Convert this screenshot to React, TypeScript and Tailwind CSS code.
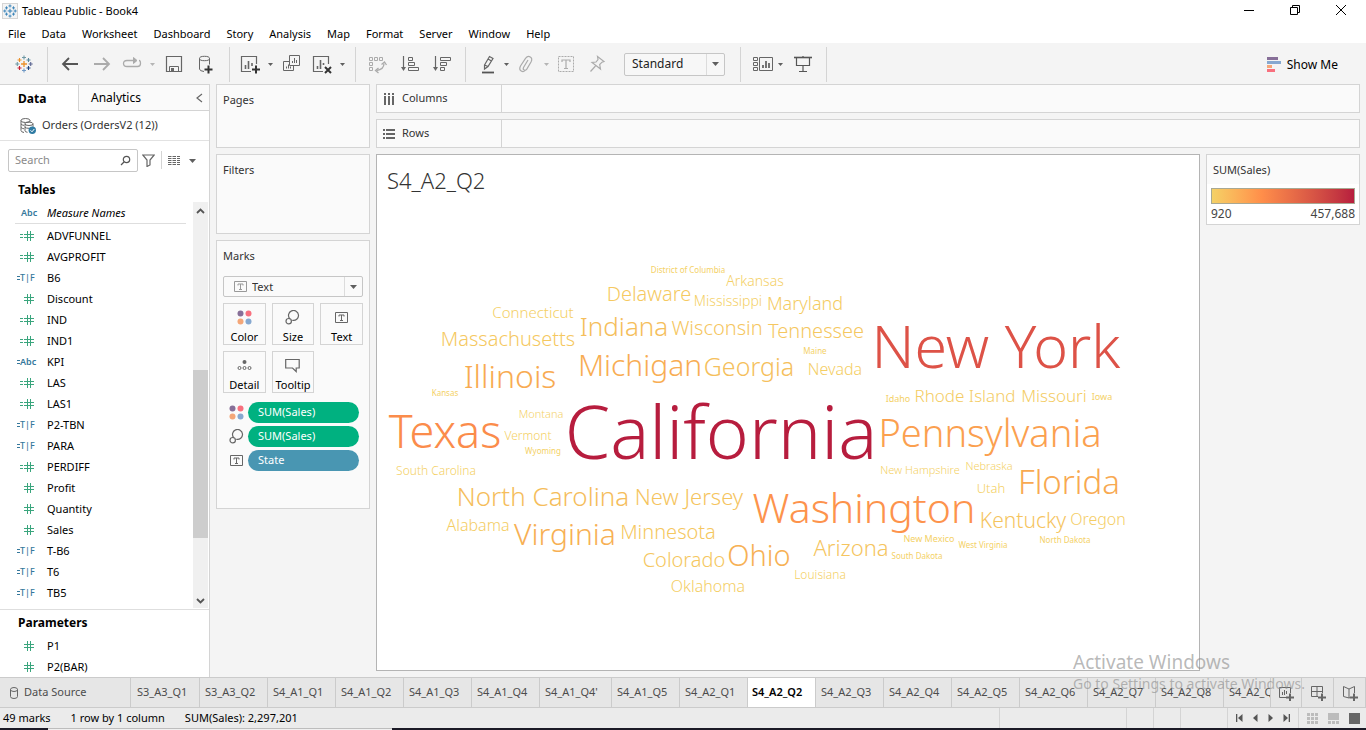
import type { ReactNode } from "react";

const UI_FONT = "font-['Noto_Sans','Open_Sans',sans-serif]";

/* ---------- icons ---------- */

function Plus({ x, y, color }: { x: number; y: number; color: string }) {
  return <path d={`M${x - 2} ${y}h4M${x} ${y - 2}v4`} stroke={color} strokeWidth="1.1" />;
}

function LogoIcon({ mono = false }: { mono?: boolean }) {
  const c = (value: string) => (mono ? "#2f7db5" : value);
  return (
    <svg viewBox="0 0 18 18" className={mono ? "size-3.5" : "size-4.5"} fill="none" aria-hidden="true">
      <path d="M9 6v6M6 9h6" stroke={c("#eb912b")} strokeWidth="1.3" />
      <path d="M4.5 3v4M2.5 5h4" stroke={c("#eb912b")} strokeWidth="1.1" />
      <path d="M13.5 3v4M11.5 5h4" stroke={c("#59879b")} strokeWidth="1.1" />
      <path d="M4.5 11v4M2.5 13h4" stroke={c("#c72035")} strokeWidth="1.1" />
      <path d="M13.5 11v4M11.5 13h4" stroke={c("#1f447e")} strokeWidth="1.1" />
      <Plus x={9} y={2.5} color={c("#7099a5")} />
      <Plus x={9} y={15.5} color={c("#7099c5")} />
      <Plus x={2.3} y={9} color={c("#7099a5")} />
      <Plus x={15.7} y={9} color={c("#5c6692")} />
    </svg>
  );
}

function Icon({ children, color = "#666", size = 20 }: { children: ReactNode; color?: string; size?: number }) {
  return (
    <svg
      width={size}
      height={size}
      viewBox={`0 0 ${size} ${size}`}
      fill="none"
      stroke={color}
      strokeWidth="1"
      aria-hidden="true"
      className="shrink-0"
    >
      {children}
    </svg>
  );
}

function Caret({ light = false, big = false }: { light?: boolean; big?: boolean }) {
  return (
    <svg
      width={big ? 7 : 5}
      height={big ? 4 : 3}
      viewBox="0 0 7 4"
      aria-hidden="true"
      className="pointer-events-none shrink-0"
    >
      <path d="M0 0h7L3.5 4z" fill={light ? "#b5b5b5" : "#5f5f5f"} />
    </svg>
  );
}

const BackIcon = () => (
  <Icon color="#555">
    <path d="M18 10H3M9 4l-6 6 6 6" strokeWidth="1.8" />
  </Icon>
);
const ForwardIcon = () => (
  <Icon color="#ababab">
    <path d="M2 10h15M11 4l6 6-6 6" strokeWidth="1.8" />
  </Icon>
);
const RedoIcon = () => (
  <Icon color="#ababab">
    <path d="M14 6.500H5Q1.500 6.500 1.500 9.500T5 12.500H15.500Q18.500 12.500 18.500 9.500T17 6.500" strokeWidth="1.300" />
    <path d="M11.500 3.500l3.500 3-3.500 3z" fill="#ababab" />
  </Icon>
);
const SaveIcon = () => (
  <Icon>
    <path d="M2.500 2.500h15v15h-15z" strokeWidth="1.200" />
    <path d="M5.500 17.500v-5h9v5" />
    <path d="M7 14h3v3.500H7z" fill="#666" stroke="none" />
  </Icon>
);
const DatabasePlusIcon = () => (
  <Icon>
    <ellipse cx="8.500" cy="4.500" rx="5" ry="2.200" />
    <path d="M3.500 4.500v10.500q0 2 4.500 2.500M13.500 4.500v6" />
    <path d="M8.500 15.500h8M12.500 11.500v8" stroke="#333" strokeWidth="2" />
  </Icon>
);
const NewSheetIcon = () => (
  <Icon>
    <path d="M16.500 10V2.500h-15v15H11" strokeWidth="1.200" />
    <path d="M5.500 15v-4M8.500 15V7M12 12V9" strokeWidth="1.600" />
    <path d="M12 15.500h8M16 11.500v8" stroke="#333" strokeWidth="2" />
  </Icon>
);
const DuplicateIcon = () => (
  <Icon>
    <path d="M7.500 1.500h10v10h-10zM7 7.500H1.500v9h10V12" />
    <path d="M10.500 9V7M12.500 9V4M14.500 9V6M4.500 14.500v-2M6.500 14.500v-4M8.500 14.500v-2" />
  </Icon>
);
const ClearSheetIcon = () => (
  <Icon>
    <path d="M16.500 10V2.500h-15v15H11" strokeWidth="1.200" />
    <path d="M5.500 15v-3M8.500 15V6M11.500 11V9" strokeWidth="1.600" />
    <path d="M13 13l6 6M19 13l-6 6" stroke="#333" strokeWidth="2" />
  </Icon>
);
const SwapIcon = () => (
  <Icon color="#ababab">
    <path d="M1.500 3.500h3v3h-3zM6.500 3.500h3v3h-3zM11.500 3.500h3v3h-3zM1.500 8.500h3v3h-3zM1.500 13.500h3v3h-3z" />
    <path d="M16 9.500q0 6-7.500 7" strokeWidth="1.300" />
    <path d="M13.500 10.500l3-2.500 2 3M10.500 14l-3 2.500 3 2.500" strokeWidth="1.300" />
  </Icon>
);
const SortAscIcon = () => (
  <Icon>
    <path d="M3.500 2v13" strokeWidth="1.200" />
    <path d="M1 13h5l-2.500 4z" fill="#666" stroke="none" />
    <path d="M8.500 3.500h4v3h-4zM8.500 8.500h6v3h-6zM8.500 13.500h10v3h-10z" />
  </Icon>
);
const SortDescIcon = () => (
  <Icon>
    <path d="M3.500 2v13" strokeWidth="1.200" />
    <path d="M1 13h5l-2.500 4z" fill="#666" stroke="none" />
    <path d="M8.500 3.500h10v3h-10zM8.500 8.500h6v3h-6zM8.500 13.500h4v3h-4z" />
  </Icon>
);
const HighlightIcon = () => (
  <Icon>
    <path d="M6.500 11L11.500 2.500l3.500 2L10 12.500l-3.500 2.500zM6.500 11l3.500 1.500M10 5l3.500 2" strokeWidth="1.200" />
    <path d="M4 18.500h12" strokeWidth="1.800" stroke="#555" />
  </Icon>
);
const ClipIcon = () => (
  <Icon color="#ababab">
    <path
      d="M12 6l-4.500 7.500q-.8 2 .7 2.600t2.600-1L15 8q1.800-3.500-.7-5t-4.800 1.300L4.500 12q-1.800 3.500.7 5t4.500-1"
      strokeWidth="1.200"
    />
  </Icon>
);
const LabelIcon = () => (
  <Icon color="#ababab">
    <path d="M2.500 2.500h15v15h-15z" strokeDasharray="2 1" />
    <path d="M6 8V6h8v2M10 6v8.500M8 14.500h4" strokeWidth="1.200" />
  </Icon>
);
const PinIcon = () => (
  <Icon color="#ababab">
    <path d="M9.500 2.500l6.500 5-2 .7-2.300 2.300.8 4.500L4 8.500l4-.5 2-2.500zM7.500 12L2.500 17.500" strokeWidth="1.200" />
  </Icon>
);
const CardsIcon = () => (
  <Icon>
    <path d="M.5 3.500h4v3h-4zM.5 8.500h4v3h-4zM.5 13.500h4v3h-4zM6.500 3.500h13v13h-13z" />
    <path d="M10 14v-3M13 14V7M16 14V9" strokeWidth="1.800" />
  </Icon>
);
const PresentIcon = () => (
  <Icon color="#555">
    <path d="M1 3.500h18" strokeWidth="1.600" />
    <path d="M3.500 4v7.500h13V4M10 11.500V17M10 2v1.500M6 17.500h8" strokeWidth="1.200" />
  </Icon>
);

function ColorDots() {
  return (
    <svg width="15" height="15" viewBox="0 0 15 15" aria-hidden="true" className="shrink-0">
      <circle cx="3.500" cy="3.500" r="3" fill="#876f98" />
      <circle cx="11.500" cy="3.500" r="3" fill="#f8707e" />
      <circle cx="3.500" cy="11.500" r="3" fill="#f4a678" />
      <circle cx="11.500" cy="11.500" r="3" fill="#86a8d0" />
    </svg>
  );
}
const SizeIcon = () => (
  <Icon size={15} color="#666">
    <path d="M4.800 8.800A5 5 0 1 1 7.300 10.300" strokeWidth="1.200" />
    <circle cx="3.700" cy="11.200" r="2.700" strokeWidth="1.200" />
  </Icon>
);
const TextIcon = ({ light = false }: { light?: boolean }) => (
  <Icon size={15} color={light ? "#999" : "#666"}>
    <path d="M1.500 2.500h12v10h-12z" />
    <path d="M5 6.500V5h5v1.500M7.500 5v5.500M6 10.500h3" />
  </Icon>
);
const DetailIcon = () => (
  <Icon size={15}>
    <circle cx="7.500" cy="4" r="2" fill="#666" stroke="none" />
    <circle cx="2.500" cy="10" r="1.500" />
    <circle cx="7.500" cy="10" r="1.500" />
    <circle cx="12.500" cy="10" r="1.500" />
  </Icon>
);
const TooltipIcon = () => (
  <Icon size={15}>
    <path d="M.7 1.500h13.500v8.500h-3v3.500L7.500 10H.7z" strokeWidth="1.200" />
  </Icon>
);

/* ---------- window chrome ---------- */

function TitleBar() {
  return (
    <header className="flex h-[22px] shrink-0 items-center bg-white pl-0.5">
      <span className="border border-[#d5d5d5] bg-[#f4f4f4]">
        <LogoIcon mono />
      </span>
      <h1 className="ml-1 text-[11px]">Tableau Public - Book4</h1>
      <div className="ml-auto flex pb-0.5 pr-0.5">
        <button aria-label="Minimize" className="flex w-[46px] justify-center">
          <Icon size={12} color="#000">
            <path d="M1 6.500h10" />
          </Icon>
        </button>
        <button aria-label="Restore" className="flex w-[46px] justify-center">
          <Icon size={12} color="#000">
            <path d="M1.500 3.500h7v7h-7zM3.500 3V1.500h7v7H9" />
          </Icon>
        </button>
        <button aria-label="Close" className="flex w-[46px] justify-center">
          <Icon size={12} color="#000">
            <path d="M1 1l10 10M11 1L1 11" />
          </Icon>
        </button>
      </div>
    </header>
  );
}

const MENUS = [
  "File",
  "Data",
  "Worksheet",
  "Dashboard",
  "Story",
  "Analysis",
  "Map",
  "Format",
  "Server",
  "Window",
  "Help",
];

function MenuBar() {
  return (
    <nav className="flex h-[21px] shrink-0 items-center gap-4 bg-white pl-2 pt-1">
      {MENUS.map((menu) => (
        <button key={menu} className="text-[11px]">
          {menu}
        </button>
      ))}
    </nav>
  );
}

function Tool({ label, className, children }: { label: string; className: string; children: ReactNode }) {
  return (
    <button aria-label={label} className={`flex h-full shrink-0 items-center justify-center ${className}`}>
      {children}
    </button>
  );
}

function ToolGroup({ className = "", children }: { className?: string; children: ReactNode }) {
  return <div className={`flex shrink-0 items-center border-r border-[#d4d4d4] pb-px ${className}`}>{children}</div>;
}

function Toolbar() {
  return (
    <div className="flex h-[41px] shrink-0 bg-[#f4f4f4] pt-1 pb-0.5">
      <ToolGroup>
        <Tool label="Start page" className="w-[47px]">
          <LogoIcon />
        </Tool>
      </ToolGroup>
      <ToolGroup className="pl-1.5 pr-[7px]">
        <Tool label="Undo" className="w-8"><BackIcon /></Tool>
        <Tool label="Redo" className="w-8"><ForwardIcon /></Tool>
        <Tool label="Replay" className="w-7"><RedoIcon /></Tool>
        <Tool label="Replay options" className="w-3"><Caret light /></Tool>
        <Tool label="Save" className="w-8"><SaveIcon /></Tool>
        <Tool label="New data source" className="w-8"><DatabasePlusIcon /></Tool>
      </ToolGroup>
      <ToolGroup className="pl-1 pr-[5px]">
        <Tool label="New worksheet" className="w-8"><NewSheetIcon /></Tool>
        <Tool label="New worksheet options" className="w-2"><Caret /></Tool>
        <Tool label="Duplicate" className="w-9"><DuplicateIcon /></Tool>
        <Tool label="Clear sheet" className="w-6"><ClearSheetIcon /></Tool>
        <Tool label="Clear options" className="w-4"><Caret /></Tool>
      </ToolGroup>
      <ToolGroup className="pl-1.5 pr-[7px]">
        <Tool label="Swap rows and columns" className="w-8"><SwapIcon /></Tool>
        <Tool label="Sort ascending" className="w-8"><SortAscIcon /></Tool>
        <Tool label="Sort descending" className="w-8"><SortDescIcon /></Tool>
      </ToolGroup>
      <ToolGroup className="pl-2 pr-[15px]">
        <Tool label="Highlight" className="w-7"><HighlightIcon /></Tool>
        <Tool label="Highlight options" className="w-2"><Caret /></Tool>
        <Tool label="Group members" className="w-8"><ClipIcon /></Tool>
        <Tool label="Group options" className="w-2"><Caret light /></Tool>
        <Tool label="Show mark labels" className="w-8"><LabelIcon /></Tool>
        <Tool label="Fix axes" className="w-8"><PinIcon /></Tool>
        <div className="relative ml-2.5 h-[23px] w-[101px]">
          <select
            aria-label="Fit"
            className="block h-full w-full appearance-none rounded-xs border border-[#c6c6c6] bg-[#f7f7f7] pl-[7px] text-[12px] leading-[20px] text-[#222]"
          >
            <option>Standard</option>
          </select>
          <span className="pointer-events-none absolute inset-y-px right-px flex w-[18px] items-center justify-center border-l border-[#dcdcdc]">
            <Caret big />
          </span>
        </div>
      </ToolGroup>
      <ToolGroup className="pl-2.5 pr-[5px]">
        <Tool label="Show/hide cards" className="w-6"><CardsIcon /></Tool>
        <Tool label="Card options" className="w-2.5"><Caret /></Tool>
        <Tool label="Presentation mode" className="w-9"><PresentIcon /></Tool>
      </ToolGroup>
      <button className="ml-auto flex items-center gap-1.5 pr-7 text-[12px]">
        <svg width="14" height="16" viewBox="0 0 14 16" aria-hidden="true">
          <path d="M0 0h11v3H0z" fill="#876f98" />
          <path d="M0 4h14v3H0z" fill="#86a8d0" />
          <path d="M0 8h5v3H0z" fill="#f4a678" />
          <path d="M0 12h8v3H0z" fill="#f8707e" />
        </svg>
        Show Me
      </button>
    </div>
  );
}

/* ---------- data pane ---------- */

type FieldKind = "number" | "calcNumber" | "calcBool" | "text" | "calcText";

const FIELDS: [string, FieldKind][] = [
  ["ADVFUNNEL", "calcNumber"],
  ["AVGPROFIT", "calcNumber"],
  ["B6", "calcBool"],
  ["Discount", "number"],
  ["IND", "calcNumber"],
  ["IND1", "calcNumber"],
  ["KPI", "calcText"],
  ["LAS", "calcNumber"],
  ["LAS1", "calcNumber"],
  ["P2-TBN", "calcBool"],
  ["PARA", "calcBool"],
  ["PERDIFF", "calcNumber"],
  ["Profit", "number"],
  ["Quantity", "number"],
  ["Sales", "number"],
  ["T-B6", "calcBool"],
  ["T6", "calcBool"],
  ["TB5", "calcBool"],
];

function FieldIcon({ kind }: { kind: FieldKind }) {
  const isNumber = kind === "number" || kind === "calcNumber";
  const isCalc = kind.startsWith("calc");
  const color = isNumber ? "#3aa57d" : "#35789c";
  return (
    <span className="flex w-10 shrink-0 items-center text-[9px] text-[#35789c]">
      <span
        className={
          isNumber
            ? "flex w-[27px] items-center justify-end gap-px"
            : kind === "text"
              ? "flex items-center pl-3.5"
              : "flex items-center pl-2.5"
        }
      >
        {isCalc && (
          <svg width="3" height="10" viewBox="0 0 3 10" aria-hidden="true">
            <path d="M0 3.500h3M0 6.500h3" stroke={color} />
          </svg>
        )}
        {isNumber && (
          <svg width="10" height="10" viewBox="0 0 10 10" aria-hidden="true">
            <path d="M3.500 0v10M6.500 0v10M0 3.500h10M0 6.500h10" stroke={color} />
          </svg>
        )}
        {kind === "calcBool" && <span className="font-medium">T|F</span>}
        {(kind === "text" || kind === "calcText") && <b className="font-semibold">Abc</b>}
      </span>
    </span>
  );
}

function FieldRow({ name, kind, italic = false }: { name: string; kind: FieldKind; italic?: boolean }) {
  return (
    <li className="flex h-[21px] items-center pt-px pl-[7px] text-[11px]">
      <FieldIcon kind={kind} />
      <span className={italic ? "italic" : ""}>{name}</span>
    </li>
  );
}

function DataPane() {
  return (
    <aside className="flex w-[210px] shrink-0 flex-col border-r border-t border-[#d4d4d4] bg-white">
      <div role="tablist" className="flex h-[26px] shrink-0 text-[12px]">
        <button role="tab" aria-selected="true" className="w-[78px] pt-px pl-[18px] text-left font-bold">
          Data
        </button>
        <button
          role="tab"
          aria-selected="false"
          className="flex-1 border-b border-l border-[#d4d4d4] bg-[#fafafa] pt-px pl-3 text-left"
        >
          Analytics
        </button>
        <button aria-label="Collapse pane" className="flex w-[20px] items-center border-b border-[#d4d4d4] bg-[#fafafa] pl-1.5">
          <svg width="8" height="10" viewBox="0 0 8 10" fill="none" aria-hidden="true">
            <path d="M7 1L2 5l5 4" stroke="#666" strokeWidth="1.200" />
          </svg>
        </button>
      </div>
      <button className="flex h-[30px] shrink-0 items-center gap-1.5 border-b border-[#e2e2e2] pl-5 text-[11px] text-[#333]">
        <Icon size={16}>
          <ellipse cx="5.500" cy="2.500" rx="4.500" ry="2" />
          <path d="M1 2.500v10q0 1.500 3 2M10 2.500v1M1 6q1 1.200 3 1.400M1 9.500q1 1 3 1.300" />
          <ellipse cx="9" cy="5.800" rx="4" ry="1.700" />
          <path d="M5 5.800v7q0 1.200 2.500 1.500M13 5.800v3M5 9.300q1 1 4 1" />
          <circle cx="12.300" cy="12.300" r="3.700" fill="#2f7ba3" stroke="none" />
          <path d="M10.500 12.300l1.500 1.500 2.300-2.800" stroke="#fff" />
        </Icon>
        Orders (OrdersV2 (12))
      </button>
      <div className="flex h-[31px] shrink-0 items-end pl-2">
        <label className="flex h-[23px] w-[130px] items-center rounded-xs border border-[#c6c6c6] px-1.5">
          <input
            aria-label="Search fields"
            placeholder="Search"
            className="min-w-0 flex-1 bg-transparent text-[11px] outline-none placeholder:text-[#8a8a8a]"
          />
          <Icon size={11} color="#555">
            <circle cx="6.500" cy="4.500" r="3.200" strokeWidth="1.200" />
            <path d="M4 7L1 10" strokeWidth="1.200" />
          </Icon>
        </label>
        <button aria-label="Filter fields" className="ml-1 flex h-[23px] items-center">
          <Icon size={13}>
            <path d="M.8 1h11.400L8 6v5l-3 1.500V6z" strokeWidth="1.200" />
          </Icon>
        </button>
        <span className="mb-[3px] ml-1.5 h-[18px] border-l border-[#d4d4d4]" />
        <button aria-label="View options" className="ml-1.5 flex h-[23px] items-center gap-[9px]">
          <svg width="12" height="9" viewBox="0 0 12 9" aria-hidden="true">
            <path d="M0 .5h12M0 2.500h12M0 4.500h12M0 6.500h12M0 8.500h12" stroke="#666" strokeDasharray="3.500 1" />
          </svg>
          <Caret big />
        </button>
      </div>
      <h2 className="flex h-[30px] shrink-0 items-center pt-1.5 pl-[18px] text-[12px] font-bold">Tables</h2>
      <div className="flex min-h-0 flex-1">
        <ul className="min-w-0 flex-1 overflow-hidden">
          <FieldRow name="Measure Names" kind="text" italic />
          <li aria-hidden="true" className="mb-px ml-[15px] mr-[7px] border-t border-[#dedede]" />
          {FIELDS.map(([name, kind]) => (
            <FieldRow key={name} name={name} kind={kind} />
          ))}
        </ul>
        <div aria-hidden="true" className="mb-px mr-px flex w-[15px] flex-col items-center bg-[#f0f0f0] pt-1.5 pb-1">
          <svg width="9" height="6" viewBox="0 0 9 6" fill="none">
            <path d="M1 5l3.500-3.500L8 5" stroke="#555" strokeWidth="1.800" />
          </svg>
          <span className="grow-[156]" />
          <span className="w-full grow-[168] bg-[#cdcdcd]" />
          <span className="grow-[60]" />
          <svg width="9" height="6" viewBox="0 0 9 6" fill="none">
            <path d="M1 1l3.500 3.500L8 1" stroke="#555" strokeWidth="1.800" />
          </svg>
        </div>
      </div>
      <section className="shrink-0 border-t border-[#dedede]">
        <h2 className="flex h-[25px] items-center pl-[18px] text-[12px] font-bold">Parameters</h2>
        <ul>
          <FieldRow name="P1" kind="number" />
          <FieldRow name="P2(BAR)" kind="number" />
        </ul>
      </section>
    </aside>
  );
}

/* ---------- shelves ---------- */

function Card({ title, className, children }: { title: string; className: string; children?: ReactNode }) {
  return (
    <section className={`border border-[#d4d4d4] bg-[#fafafa] px-1.5 ${className}`}>
      <h2 className="flex h-[30px] items-center text-[11px] text-[#333]">{title}</h2>
      {children}
    </section>
  );
}

function MarkButton({ label, icon }: { label: string; icon: ReactNode }) {
  return (
    <button className="flex h-[42px] flex-col items-center justify-between border border-[#d4d4d4] bg-[#fafafa] pt-1.5 text-[11px]">
      {icon}
      <span className="leading-[15px]">{label}</span>
    </button>
  );
}

function Pill({ icon, label, className }: { icon: ReactNode; label: string; className: string }) {
  return (
    <li className="flex h-[21px] items-center gap-1 pl-1.5 pr-1">
      {icon}
      <button className={`h-full flex-1 rounded-full pl-2.5 text-left text-[11px] text-white ${className}`}>
        {label}
      </button>
    </li>
  );
}

function CardsColumn() {
  return (
    <div className="flex w-[154px] shrink-0 flex-col gap-1.5">
      <Card title="Pages" className="h-16" />
      <Card title="Filters" className="h-20" />
      <Card title="Marks" className="h-[269px]">
        <div className="relative mt-[5px] h-[21px]">
          <span className="pointer-events-none absolute inset-y-0 left-[10px] flex items-center">
            <TextIcon light />
          </span>
          <select
            aria-label="Mark type"
            className="block h-full w-full appearance-none rounded-xs border border-[#c6c6c6] bg-transparent pl-7 text-[11px] leading-[18px] text-[#333]"
          >
            <option>Text</option>
          </select>
          <span className="pointer-events-none absolute inset-y-px right-px flex w-[18px] items-center justify-center border-l border-[#dcdcdc]">
            <Caret big />
          </span>
        </div>
        <div className="mt-1.5 grid grid-cols-3 gap-1.5">
          <MarkButton label="Color" icon={<ColorDots />} />
          <MarkButton label="Size" icon={<SizeIcon />} />
          <MarkButton label="Text" icon={<TextIcon />} />
          <MarkButton label="Detail" icon={<DetailIcon />} />
          <MarkButton label="Tooltip" icon={<TooltipIcon />} />
        </div>
        <ul className="mt-[9px] flex flex-col gap-[3px]">
          <Pill icon={<ColorDots />} label="SUM(Sales)" className="bg-[#00b180]" />
          <Pill icon={<SizeIcon />} label="SUM(Sales)" className="bg-[#00b180]" />
          <Pill icon={<TextIcon />} label="State" className="bg-[#4996b2]" />
        </ul>
      </Card>
    </div>
  );
}

function Shelf({ label, icon }: { label: string; icon: ReactNode }) {
  return (
    <section className="flex h-[29px] shrink-0 border border-[#d4d4d4] bg-[#fafafa]">
      <h2 className="flex w-[125px] items-center gap-1.5 border-r border-[#d4d4d4] pl-1.5 text-[11px] text-[#333]">
        {icon}
        {label}
      </h2>
    </section>
  );
}

/* ---------- word cloud ---------- */

/* name, centre x, baseline y, font size, colour */
type Word = [string, number, number, number, string];

const WORDS: Word[] = [
  ["District of Columbia", 688, 273, 8, "#f4d166"],
  ["Arkansas", 755, 286, 14, "#f4cf65"],
  ["Delaware", 649, 301, 20, "#f5c961"],
  ["Mississippi", 728, 306, 14, "#f4cf65"],
  ["Maryland", 805, 310, 18, "#f4cb62"],
  ["Connecticut", 533, 318, 15, "#f4cf65"],
  ["Indiana", 624, 336, 26, "#f5be5b"],
  ["Wisconsin", 717, 335, 20, "#f5c65f"],
  ["Tennessee", 816, 338, 20, "#f5c760"],
  ["New York", 996, 368, 59, "#dd5247"],
  ["Massachusetts", 508, 346, 20, "#f5c860"],
  ["Michigan", 640, 376, 30, "#f8ad53"],
  ["Georgia", 749, 376, 25, "#f5c05c"],
  ["Maine", 815, 354, 8, "#f4d166"],
  ["Nevada", 835, 375, 16, "#f4ce64"],
  ["Illinois", 510, 388, 32, "#f8ab52"],
  ["Kansas", 445, 396, 8, "#f4d166"],
  ["Texas", 445, 448, 45, "#fb8c4b"],
  ["Montana", 541, 418, 11, "#f4d166"],
  ["Vermont", 528, 440, 12, "#f4d065"],
  ["Wyoming", 543, 454, 8, "#f4d166"],
  ["California", 721, 459, 73, "#b71d3e"],
  ["Idaho", 898, 402, 9, "#f4d166"],
  ["Rhode Island", 965, 402, 17, "#f4cc63"],
  ["Missouri", 1054, 402, 17, "#f4cc63"],
  ["Iowa", 1102, 400, 9, "#f4d166"],
  ["Pennsylvania", 990, 447, 38, "#fba04f"],
  ["New Hampshire", 920, 474, 11, "#f4d166"],
  ["Nebraska", 989, 470, 11, "#f4d166"],
  ["Utah", 991, 493, 13, "#f4d065"],
  ["Florida", 1069, 494, 33, "#f8a951"],
  ["South Carolina", 436, 475, 12, "#f4d065"],
  ["North Carolina", 543, 506, 26, "#f5bd5b"],
  ["New Jersey", 689, 505, 22, "#f5c45e"],
  ["Washington", 864, 523, 41, "#fd934c"],
  ["Kentucky", 1023, 528, 21, "#f5c45e"],
  ["Oregon", 1098, 525, 16, "#f4cd64"],
  ["Alabama", 478, 531, 16, "#f4cd64"],
  ["Virginia", 565, 545, 30, "#f7b054"],
  ["Minnesota", 668, 539, 20, "#f5c760"],
  ["Arizona", 851, 556, 22, "#f5c55f"],
  ["New Mexico", 929, 542, 9, "#f4d166"],
  ["West Virginia", 983, 548, 8, "#f4d166"],
  ["North Dakota", 1065, 543, 8, "#f4d166"],
  ["South Dakota", 917, 559, 8, "#f4d166"],
  ["Colorado", 684, 567, 20, "#f5c760"],
  ["Ohio", 759, 566, 29, "#f7b155"],
  ["Louisiana", 820, 579, 12, "#f4d065"],
  ["Oklahoma", 708, 592, 16, "#f4ce64"],
];

function Sheet() {
  return (
    <section className="flex min-w-0 flex-1 flex-col border border-[#b4b4b4] bg-white">
      <h2 className="flex h-[45px] shrink-0 items-center pt-1.5 pl-2.5 text-[22px] font-light text-[#333]">S4_A2_Q2</h2>
      <svg viewBox="377 200 822 470" className="min-h-0 w-full flex-1" role="img" aria-label="Sales by state">
        {WORDS.map(([name, x, y, size, color]) => (
          <text
            key={name}
            x={x}
            y={y}
            fontSize={size}
            fontWeight={size < 10 ? 400 : 300}
            fill={color}
            textAnchor="middle"
          >
            {name}
          </text>
        ))}
      </svg>
    </section>
  );
}

function Legend() {
  return (
    <aside className="h-[71px] w-[154px] shrink-0 border border-[#d4d4d4] bg-white">
      <h2 className="flex h-[29px] items-center bg-[#fafafa] pt-px pl-1.5 text-[11px] text-[#333]">SUM(Sales)</h2>
      <div className="mx-1 mt-1 h-4 border border-[#a8a893] bg-linear-to-r from-[#f4d166] via-[#ff8e4a] via-35% to-[#b71d3e]" />
      <div className="flex justify-between px-1 pt-px text-[12px] leading-[17px] text-[#444]">
        <span>920</span>
        <span>457,688</span>
      </div>
    </aside>
  );
}

function Workspace() {
  return (
    <main className="flex min-w-0 flex-1 flex-col gap-1.5">
      <Shelf
        label="Columns"
        icon={
          <svg width="13" height="12" viewBox="0 0 13 12" aria-hidden="true">
            <path d="M2 0v2M6 0v2M10 0v2M2 3v9M6 3v9M10 3v9" stroke="#666" strokeWidth="2" />
          </svg>
        }
      />
      <Shelf
        label="Rows"
        icon={
          <svg width="13" height="12" viewBox="0 0 13 12" aria-hidden="true">
            <path d="M0 2h2M0 6h2M0 10h2M3 2h9M3 6h9M3 10h9" stroke="#666" strokeWidth="2" />
          </svg>
        }
      />
      <div className="flex min-h-0 flex-1 items-stretch gap-1.5">
        <Sheet />
        <Legend />
      </div>
    </main>
  );
}

/* ---------- bottom bars ---------- */

const SHEET_TABS = [
  "S3_A3_Q1",
  "S3_A3_Q2",
  "S4_A1_Q1",
  "S4_A1_Q2",
  "S4_A1_Q3",
  "S4_A1_Q4",
  "S4_A1_Q4'",
  "S4_A1_Q5",
  "S4_A2_Q1",
  "S4_A2_Q2",
  "S4_A2_Q3",
  "S4_A2_Q4",
  "S4_A2_Q5",
  "S4_A2_Q6",
  "S4_A2_Q7",
  "S4_A2_Q8",
  "S4_A2_Q9",
];

const ACTIVE_TAB = "S4_A2_Q2";

function SheetTabs() {
  return (
    <div className="flex h-[31px] shrink-0 border-y border-[#cbcbcb] bg-[#e6e6e6] text-[11px] text-[#4c4c4c]">
      <button className="flex w-[131px] shrink-0 items-center gap-1.5 border-r border-[#cbcbcb] pl-2.5">
        <svg width="8" height="12" viewBox="0 0 8 12" fill="none" stroke="#666" aria-hidden="true">
          <ellipse cx="4" cy="2.500" rx="3.500" ry="2" />
          <path d="M.5 2.500v7q0 2 3.500 2t3.500-2v-7" />
        </svg>
        Data Source
      </button>
      <div role="tablist" className="flex min-w-0 flex-1 overflow-hidden pl-px">
        {SHEET_TABS.map((tab) => (
          <button
            key={tab}
            role="tab"
            aria-selected={tab === ACTIVE_TAB}
            className={`shrink-0 border-r border-[#cbcbcb] text-left ${tab.endsWith("'") ? "w-18" : "w-17"} ${
              tab === ACTIVE_TAB ? "bg-white pl-1 font-semibold text-black" : "pl-[5px]"
            }`}
          >
            {tab}
          </button>
        ))}
      </div>
      <button aria-label="New worksheet" className="flex w-8 items-center justify-center border-x border-[#cbcbcb]">
        <Icon size={16}>
          <path d="M12.500 8V2.500h-11v10H8M4.500 10V7M6.500 10V5M8.500 9V6" />
          <path d="M8 12.500h8M12 8.500v8" strokeWidth="2" />
        </Icon>
      </button>
      <button aria-label="New dashboard" className="flex w-8 items-center justify-center border-r border-[#cbcbcb]">
        <Icon size={16}>
          <path d="M12.500 8V1.500h-11v10H8M7 1.500v10M1.500 6.500h11" />
          <path d="M8 12.500h8M12 8.500v8" strokeWidth="2" />
        </Icon>
      </button>
      <button aria-label="New story" className="flex w-8 items-center justify-center border-r border-[#cbcbcb]">
        <Icon size={16}>
          <path d="M12.500 8V1.500L7 4 1.500 1.500v10L7 13V4M7 13l1.500-.5" />
          <path d="M8 12.500h8M12 8.500v8" strokeWidth="2" />
        </Icon>
      </button>
    </div>
  );
}

function StatusBar() {
  return (
    <footer className="flex h-5 shrink-0 items-center bg-[#ebebeb] text-[11px]">
      <span className="pl-[3px]">49 marks</span>
      <span className="pl-5">1 row by 1 column</span>
      <span className="pl-5">SUM(Sales): 2,297,201</span>
      <div className="ml-auto flex h-full">
        <span className="w-[127px] border-l border-[#d4d4d4]" />
        <span className="w-[27px] border-l border-[#d4d4d4]" />
        <span className="w-[27px] border-l border-[#d4d4d4]" />
        <span className="w-[47px] border-l border-[#d4d4d4]" />
        <div className="flex w-[71px] items-center justify-between border-l border-[#d4d4d4] px-2">
          <button aria-label="First sheet">
            <svg width="7" height="8" viewBox="0 0 7 8" fill="#555" aria-hidden="true">
              <path d="M0 0h1.300v8H0zM6.500 0v8L2 4z" />
            </svg>
          </button>
          <button aria-label="Previous sheet">
            <svg width="5" height="8" viewBox="0 0 5 8" fill="#555" aria-hidden="true">
              <path d="M4.500 0v8L0 4z" />
            </svg>
          </button>
          <button aria-label="Next sheet">
            <svg width="5" height="8" viewBox="0 0 5 8" fill="#555" aria-hidden="true">
              <path d="M.5 0v8L5 4z" />
            </svg>
          </button>
          <button aria-label="Last sheet">
            <svg width="7" height="8" viewBox="0 0 7 8" fill="#555" aria-hidden="true">
              <path d="M5.700 0H7v8H5.700zM.5 0v8L5 4z" />
            </svg>
          </button>
        </div>
        <div className="flex w-[68px] items-center justify-between border-l border-[#d4d4d4] pl-2 pr-1.5">
          <button aria-label="Tabs view">
            <svg width="11" height="11" viewBox="0 0 11 11" fill="#bcbcbc" aria-hidden="true">
              <path d="M0 0h3v3H0zM4 0h3v3H4zM8 0h3v3H8zM0 4h3v3H0zM4 4h3v3H4zM8 4h3v3H8zM0 8h3v3H0zM4 8h3v3H4zM8 8h3v3H8z" />
            </svg>
          </button>
          <button aria-label="Filmstrip view">
            <svg width="11" height="11" viewBox="0 0 11 11" fill="#bcbcbc" aria-hidden="true">
              <path d="M0 0h11v7H0zM0 8h3v3H0zM4 8h3v3H4zM8 8h3v3H8z" />
            </svg>
          </button>
          <button aria-label="Sheet sorter">
            <svg width="11" height="11" viewBox="0 0 11 11" fill="#666" aria-hidden="true">
              <path d="M0 0h11v11H0z" />
            </svg>
          </button>
        </div>
      </div>
    </footer>
  );
}

export default function App() {
  return (
    <div className={`relative flex h-screen flex-col overflow-hidden bg-[#f4f4f4] text-black ${UI_FONT}`}>
      <TitleBar />
      <MenuBar />
      <Toolbar />
      <div className="flex min-h-0 flex-1">
        <DataPane />
        <div className="flex min-w-0 flex-1 gap-1.5 px-1.5 pb-1.5">
          <CardsColumn />
          <Workspace />
        </div>
      </div>
      <SheetTabs />
      <StatusBar />
      <div aria-hidden="true" className="flex h-0.5 shrink-0 bg-[#1b1a26]">
        <span className="ml-12 w-[344px] border-t border-[#bdbdbd] bg-[#f0f0f0]" />
      </div>
      <div className="pointer-events-none absolute right-[57px] bottom-[36px] w-[236px] whitespace-nowrap text-[#8a8a8a]/60">
        <p className="text-[19px] leading-[24px]">Activate Windows</p>
        <p className="text-[14px] leading-[20px]">Go to Settings to activate Windows.</p>
      </div>
    </div>
  );
}
